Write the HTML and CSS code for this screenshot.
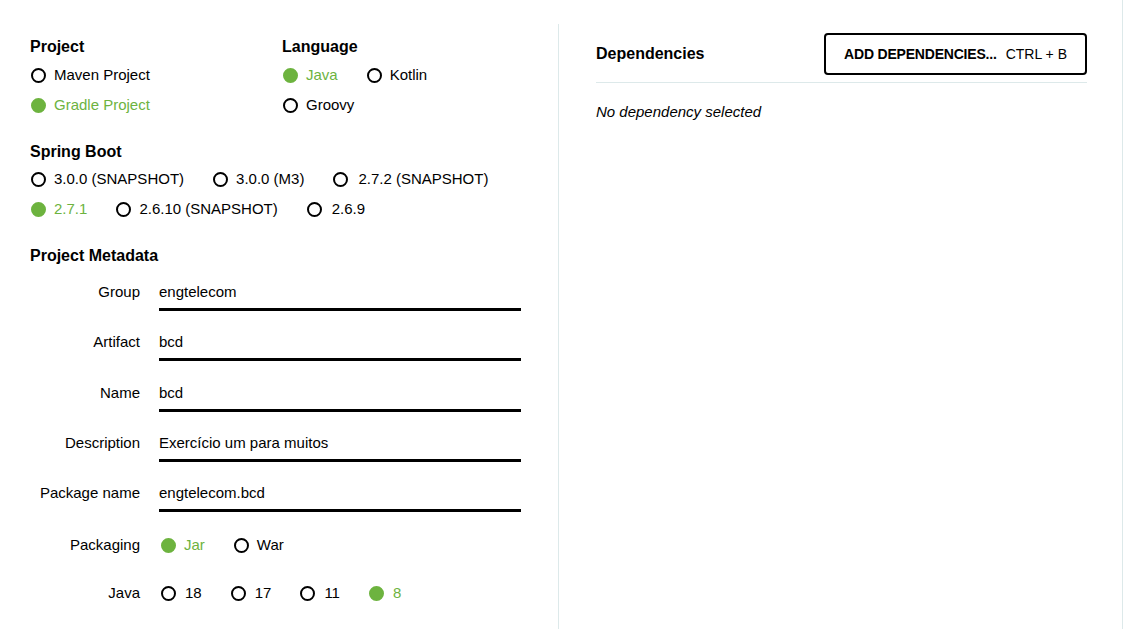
FILE: index.html
```html
<!DOCTYPE html>
<html lang="en">
<head>
<meta charset="utf-8">
<title>Spring Initializr</title>
<link rel="stylesheet" href="styles.css">
</head>
<body>
<div class="page">
  <div class="main">
    <div class="col-left">
      <div class="top-groups">
        <section class="group group-project">
          <h2 class="heading">Project</h2>
          <div class="radio-row"><span class="radio"><span class="dot"></span>Maven Project</span></div>
          <div class="radio-row"><span class="radio checked"><span class="dot"></span>Gradle Project</span></div>
        </section>
        <section class="group">
          <h2 class="heading">Language</h2>
          <div class="radio-row">
            <span class="radio checked"><span class="dot"></span>Java</span>
            <span class="radio"><span class="dot"></span>Kotlin</span>
          </div>
          <div class="radio-row"><span class="radio"><span class="dot"></span>Groovy</span></div>
        </section>
      </div>

      <section class="group group-boot">
        <h2 class="heading">Spring Boot</h2>
        <div class="radio-row">
          <span class="radio"><span class="dot"></span>3.0.0 (SNAPSHOT)</span>
          <span class="radio"><span class="dot"></span>3.0.0 (M3)</span>
          <span class="radio"><span class="dot"></span>2.7.2 (SNAPSHOT)</span>
        </div>
        <div class="radio-row">
          <span class="radio checked"><span class="dot"></span>2.7.1</span>
          <span class="radio"><span class="dot"></span>2.6.10 (SNAPSHOT)</span>
          <span class="radio"><span class="dot"></span>2.6.9</span>
        </div>
      </section>

      <section class="group group-meta">
        <h2 class="heading">Project Metadata</h2>
        <div class="fields">
          <div class="field"><span class="label">Group</span><span class="input">engtelecom</span></div>
          <div class="field"><span class="label">Artifact</span><span class="input">bcd</span></div>
          <div class="field"><span class="label">Name</span><span class="input">bcd</span></div>
          <div class="field"><span class="label">Description</span><span class="input">Exercício um para muitos</span></div>
          <div class="field"><span class="label">Package name</span><span class="input">engtelecom.bcd</span></div>
        </div>
        <div class="field-radio field-packaging">
          <span class="label">Packaging</span>
          <div class="radio-row">
            <span class="radio checked"><span class="dot"></span>Jar</span>
            <span class="radio"><span class="dot"></span>War</span>
          </div>
        </div>
        <div class="field-radio field-java">
          <span class="label">Java</span>
          <div class="radio-row">
            <span class="radio"><span class="dot"></span>18</span>
            <span class="radio"><span class="dot"></span>17</span>
            <span class="radio"><span class="dot"></span>11</span>
            <span class="radio checked"><span class="dot"></span>8</span>
          </div>
        </div>
      </section>
    </div>

    <div class="col-right">
      <div class="deps-header">
        <h2 class="heading">Dependencies</h2>
        <button class="add-btn"><strong>ADD DEPENDENCIES...</strong><span class="shortcut">CTRL + B</span></button>
      </div>
      <p class="empty">No dependency selected</p>
    </div>
  </div>
</div>
</body>
</html>
```

FILE: styles.css
```css
html, body {
  margin: 0;
  padding: 0;
  background: #fff;
}

body {
  font-family: "Liberation Sans", Arial, sans-serif;
  font-size: 15px;
  color: #000;
}

.page {
  width: 1122px;
  height: 629px;
  border-right: 1px solid #dde9ea;
  overflow: hidden;
}

.main {
  display: flex;
  margin-top: 24px;
  height: 605px;
}

.col-left {
  width: 491px;
  padding: 13px 37px 0 30px;
  border-right: 1px solid #dde9ea;
}

.col-right {
  width: 491px;
  padding: 0 35px 0 37px;
}

.heading {
  margin: 0;
  font-size: 16px;
  font-weight: bold;
  line-height: 20px;
  color: #000;
}

.top-groups {
  display: flex;
}

.group-project {
  width: 252px;
}

.group .heading {
  margin-bottom: 8px;
}

.radio-row {
  display: flex;
  height: 20px;
  line-height: 20px;
  margin-bottom: 10px;
}

.radio {
  display: flex;
  align-items: center;
  margin-right: 28px;
  white-space: nowrap;
}

.dot {
  width: 11px;
  height: 11px;
  border: 2px solid #000;
  border-radius: 50%;
  margin: 0 8px 0 1px;
  flex: none;
}

.radio.checked {
  color: #6db33f;
}

.radio.checked .dot {
  background: #6db33f;
  border-color: #6db33f;
}

.group-boot {
  margin-top: 17px;
}

.group-boot .heading {
  margin-bottom: 7px;
}

.group-boot .radio:nth-child(3) .dot {
  margin-right: 10px;
}

.group-meta {
  margin-top: 27px;
}

.group-meta .heading {
  margin-bottom: 16px;
}

.fields {
  display: flex;
  flex-direction: column;
  gap: 21.25px;
}

.field,
.field-radio {
  display: flex;
  align-items: flex-start;
}

.label {
  width: 110px;
  text-align: right;
  margin-right: 19px;
  line-height: 20px;
  flex: none;
}

.input {
  flex: 1;
  line-height: 20px;
  padding-bottom: 6px;
  border-bottom: 3px solid #000;
}

.field-radio .radio-row {
  margin-bottom: 0;
}

.field-radio .radio {
  margin-right: 27px;
}

.field-radio .dot {
  margin: 0 8px 0 2px;
}

.field-packaging {
  margin-top: 23px;
}

.field-java {
  margin-top: 28px;
}

.field-java .dot {
  margin-right: 9px;
}

.deps-header {
  display: flex;
  justify-content: space-between;
  align-items: center;
  padding: 9px 0 7px;
  border-bottom: 1px solid #dde9ea;
}

.add-btn {
  height: 42px;
  padding: 0 18px;
  border: 2px solid #000;
  border-radius: 4px;
  background: #fff;
  font-family: "Liberation Sans", Arial, sans-serif;
  font-size: 14px;
  color: #000;
  display: flex;
  align-items: center;
  cursor: pointer;
}

.add-btn strong {
  font-weight: bold;
  letter-spacing: -0.2px;
}

.shortcut {
  margin-left: 9px;
  font-weight: normal;
}

.empty {
  margin: 19px 0 0;
  font-style: italic;
  line-height: 20px;
}
```
